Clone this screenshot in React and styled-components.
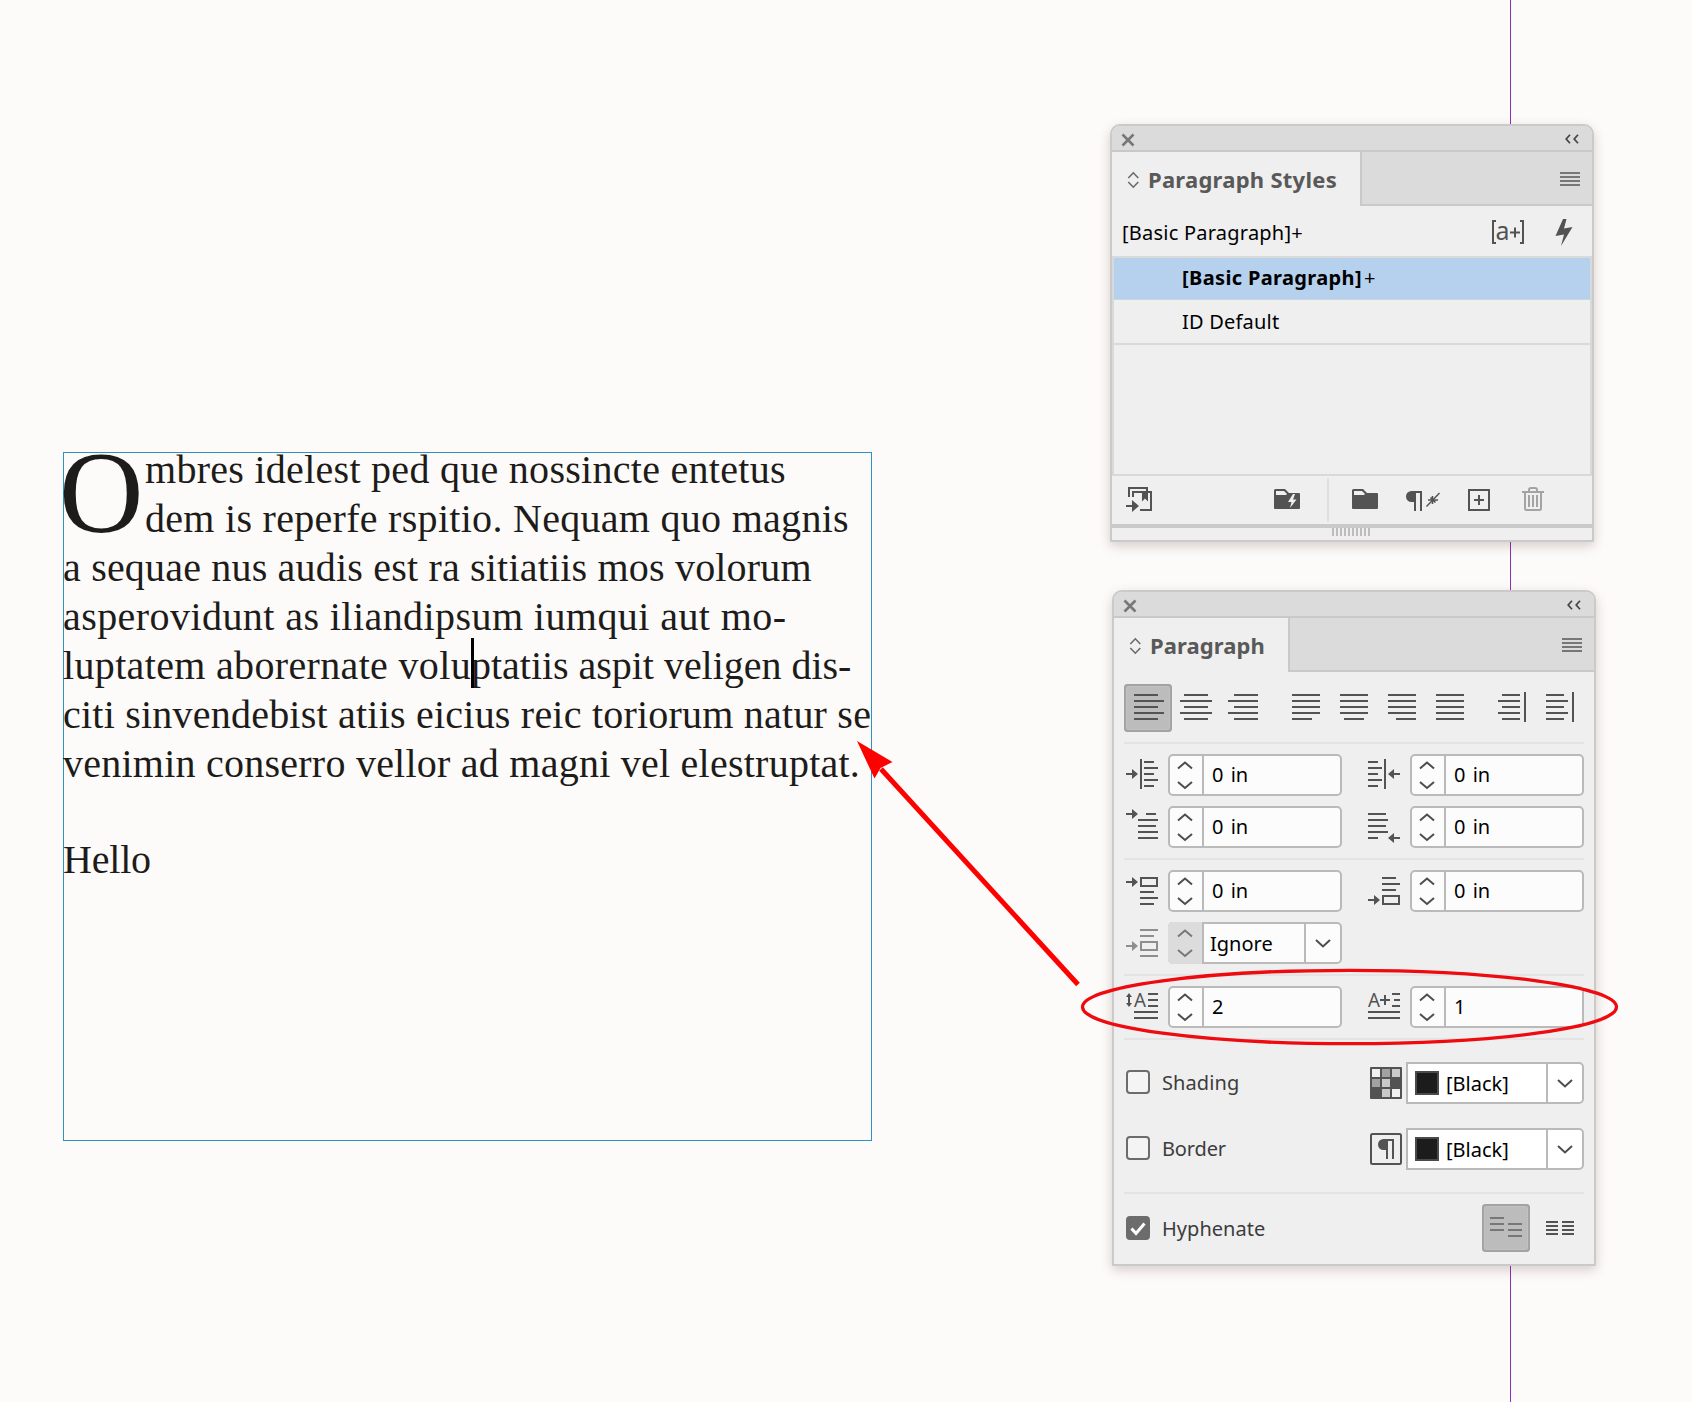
import React from 'react'
import styled, { createGlobalStyle, css } from 'styled-components'

const GlobalStyle = createGlobalStyle`
body {
    margin: 0;
    background: #fdfbf9;
    overflow: hidden;
}
* {
    box-sizing: border-box;
}
svg {
    display: block;
    flex: none;
    overflow: visible;
}
`

const Pasteboard = styled.div`
position: relative;
width: 1692px;
height: 1402px;
overflow: hidden;
font-family: 'Noto Sans', 'Open Sans', sans-serif;
font-size: 20px;
color: #000;
`

const MarginGuide = styled.div`
position: absolute;
left: 1510px;
top: 0;
width: 1px;
height: 100%;
background: #8c2fba;
`

/* text frame */

const TextFrame = styled.div`
position: absolute;
left: 63px;
top: 452px;
width: 809px;
height: 689px;
border: 1px solid #2b93bf;
font-family: 'Liberation Serif', serif;
font-size: 40px;
color: #1d1c1a;
`

const Story = styled.div`
margin: -8px 0 0 -1px;
`

const DropRow = styled.div`
display: flex;
`

const DropCap = styled.div`
width: 82px;
font-size: 117px;
line-height: 96px;
text-indent: -4px;
`

const Line = styled.div`
height: 49px;
line-height: 49px;
white-space: pre;
letter-spacing: ${p => p.$track || 0}px;
`

const LastLine = styled(Line)`
margin-top: 47px;
`

const Tight = styled.span`
letter-spacing: -0.03px;
`

const CaretHolder = styled.span`
position: relative;
`

const Caret = styled.span`
position: absolute;
left: 0;
top: -5px;
width: 3px;
height: 50px;
background: #000;
`

/* panels */

const Panel = styled.div`
position: absolute;
left: ${p => p.$x}px;
top: ${p => p.$y}px;
width: 484px;
background: #efefef;
border: 2px solid #c9cac9;
border-radius: 10px 10px 1px 1px;
box-shadow: 0 4px 12px rgba(70, 40, 40, 0.22);
`

const TitleBar = styled.div`
display: flex;
justify-content: space-between;
height: 26px;
padding: 8px 13px 0 10px;
background: #dbdbdb;
border-bottom: 2px solid #c9c9c9;
border-radius: 8px 8px 0 0;
`

const TabBar = styled.div`
display: flex;
height: 54px;
`

const Tab = styled.div`
display: flex;
align-items: center;
gap: 9px;
width: ${p => p.$width}px;
padding: 0 0 1px 16px;
font-size: 22px;
font-weight: 700;
letter-spacing: ${p => p.$track}px;
color: #595959;
white-space: nowrap;

svg {
    margin-top: 2px;
}
`

const TabRest = styled.div`
flex: 1;
display: flex;
justify-content: flex-end;
padding: 20px 12px 0 0;
background: #dbdbdb;
border-left: 2px solid #c9c9c9;
border-bottom: 2px solid #c9c9c9;
`

const CurrentStyle = styled.div`
display: flex;
align-items: center;
height: 50px;
padding: 3px 19px 0 10px;
letter-spacing: 0.23px;
`

const StyleActions = styled.div`
display: flex;
align-items: center;
gap: 30px;
margin: 0 0 1px auto;
`

const StyleList = styled.div`
height: 220px;
border: 2px solid #d9d9d9;
`

const StyleItem = styled.div`
display: flex;
align-items: center;
height: 45px;
padding-left: 68px;
letter-spacing: 0.2px;
border-bottom: 2px solid #d9d9d9;
${p => p.$selected && css`
    gap: 2px;
    height: 42px;
    padding-bottom: 2px;
    background: #b5d1ee;
    border-bottom: 1px solid #ccd7e3;
    letter-spacing: 0.36px;
`}
`

const Bottom = styled.div`
display: flex;
align-items: center;
height: 48px;
`

const Tool = styled.div`
margin-left: ${p => p.$gap}px;
`

const Separator = styled.div`
width: 2px;
height: 44px;
margin-left: 27px;
background: #dfdfdf;
`

const ResizeBar = styled.div`
display: flex;
justify-content: center;
gap: 2px;
height: 16px;
padding-right: 2px;
border-top: 4px solid #c9cac9;
`

const Grip = styled.div`
width: 2px;
height: 8px;
background: #bdbdbd;
`

const Body = styled.div`
padding: 12px 10px;
`

const AlignRow = styled.div`
display: flex;
justify-content: space-between;
`

const Group = styled.div`
display: flex;
`

const IconButton = styled.div`
width: 48px;
height: 48px;
${p => p.$active && css`
    background: #bcbcbc;
    border-radius: 4px;
    box-shadow: inset 0 0 0 2px #a3a3a3, inset 0 0 0 3px #c1c1c1;
`}
`

const Divider = styled.div`
height: 2px;
margin: ${p => p.$space || '10px'} 0;
background: #e4e4e4;
`

const Fields = styled.div`
display: grid;
grid-template-columns: 218px 218px;
column-gap: 24px;
row-gap: 10px;
`

const Field = styled.div`
display: flex;
`

const Box = styled.div`
display: flex;
width: 174px;
height: 42px;
border: 2px solid #bababa;
border-radius: 5px;
background: #fcfcfc;
`

const Stepper = styled.div`
width: 34px;
height: 42px;
margin: -2px 0 -2px -2px;
border-right: 2px solid #bababa;
box-sizing: content-box;
${p => p.$disabled && css`
    background: #dcdcdc;
    border-radius: 5px 0 0 5px;
`}
`

const Value = styled.div`
flex: 1;
display: flex;
align-items: center;
padding: 0 0 ${p => p.$lift || 0}px ${p => p.$left || 8}px;
word-spacing: 2px;
`

const DropButton = styled.div`
display: flex;
align-items: center;
justify-content: center;
width: 36px;
border-left: 2px solid #bababa;
`

const OptionRow = styled.div`
display: flex;
align-items: center;
justify-content: space-between;
height: ${p => p.$height || 42}px;
margin-bottom: ${p => p.$after || 0}px;
`

const Check = styled.div`
display: flex;
align-items: center;
gap: 12px;
padding: 0 0 ${p => p.$lift || 0}px 2px;
color: #3c3c3c;
letter-spacing: ${p => p.$track}px;
`

const CheckBox = styled.div`
width: 24px;
height: 24px;
border: 2px solid #6c6c6c;
border-radius: 4px;
background: ${p => (p.$checked ? '#6c6c6c' : '#f4f4f4')};
`

const ColorSelect = styled.div`
display: flex;
width: 178px;
height: 42px;
margin-left: 4px;
border: 2px solid #bababa;
border-radius: 0 5px 5px 0;
background: #fff;
`

const Swatch = styled.div`
width: 24px;
height: 24px;
margin: 7px 0 0 7px;
border: 2px solid #4a4a4a;
background: #1c1c1c;
`

const Annotation = styled.svg`
position: absolute;
left: 0;
top: 0;
`

const INK = '#535353'

const CloseIcon = () => (
    <svg width="12" height="12" viewBox="0 0 12 12">
        <path d="M0.5 0.5l11 11M11.5 0.5l-11 11" stroke="#777" strokeWidth="2.6" />
    </svg>
)

const CollapseIcon = () => (
    <svg width="14" height="10" viewBox="0 0 14 10">
        <path d="M5 0.8L1.2 5 5 9.2M13 0.8L9.2 5l3.8 4.2" fill="none" stroke="#444" strokeWidth="1.7" />
    </svg>
)

const UpDownIcon = () => (
    <svg width="11" height="16" viewBox="0 0 11 16">
        <path d="M0.3 6L5.3 0.8 10.300 6M0.3 10l5 5.200 5-5.200" fill="none" stroke="#6a6a6a" strokeWidth="1.6" />
    </svg>
)

const MenuIcon = () => (
    <svg width="20" height="14" viewBox="0 0 20 14" fill="#777">
        {[0, 4, 8, 12].map(y => <rect key={y} y={y} width="20" height="2" />)}
    </svg>
)

// each row is [x1, x2, y], drawn 2px thick
const Bars = ({ rows }) => rows.map(([a, b, y]) => (
    <rect key={a + '-' + y} x={a} y={y} width={b - a} height="2" />
))

const ArrowRight = ({ y, x = 2 }) => (
    <path d={`M${x} ${y - 1}h6v-4l6 5-6 5v-4h-6z`} />
)

const ArrowLeft = ({ y }) => (
    <path d={`M34 ${y - 1}h-6v-4l-6 5 6 5v-4h6z`} />
)

const alignYs = [10, 16, 22, 28, 34]

const AlignIcon = ({ spans, bar, color = INK }) => (
    <svg width="48" height="48" fill={color}>
        <Bars rows={spans.map(([a, b], i) => [a, b, alignYs[i]])} />
        {bar && <rect x={bar} y="8" width="2" height="30" />}
    </svg>
)

const alignGroups = [
    [
        { spans: [[10, 34], [10, 40], [10, 34], [10, 40], [10, 34]], active: true },
        { spans: [[12, 36], [8, 40], [12, 36], [8, 40], [12, 36]] },
        { spans: [[14, 38], [8, 38], [14, 38], [8, 38], [14, 38]] },
    ],
    [
        { spans: [[10, 38], [10, 38], [10, 38], [10, 38], [10, 30]] },
        { spans: [[10, 38], [10, 38], [10, 38], [10, 38], [14, 34]] },
        { spans: [[10, 38], [10, 38], [10, 38], [10, 38], [18, 38]] },
        { spans: [[10, 38], [10, 38], [10, 38], [10, 38], [10, 38]] },
    ],
    [
        { spans: [[14, 32], [10, 32], [14, 32], [10, 32], [14, 32]], bar: 36 },
        { spans: [[10, 28], [10, 32], [10, 28], [10, 32], [10, 28]], bar: 36 },
    ],
]

const FieldIcon = ({ color = INK, children }) => (
    <svg width="44" height="42" fill={color}>{children}</svg>
)

const LeftIndent = () => (
    <FieldIcon>
        <ArrowRight y={20} />
        <rect x="16" y="5" width="2" height="30" />
        <Bars rows={[[20, 30, 7], [20, 34, 13], [20, 30, 19], [20, 34, 25], [20, 30, 31]]} />
    </FieldIcon>
)

const RightIndent = () => (
    <FieldIcon>
        <ArrowLeft y={20} />
        <rect x="18" y="5" width="2" height="30" />
        <Bars rows={[[2, 12, 7], [2, 16, 13], [2, 12, 19], [2, 16, 25], [2, 12, 31]]} />
    </FieldIcon>
)

const FirstLineIndent = () => (
    <FieldIcon>
        <ArrowRight y={8} />
        <Bars rows={[[22, 32, 7], [14, 34, 13], [14, 32, 19], [14, 34, 25], [14, 34, 31]]} />
    </FieldIcon>
)

const LastLineIndent = () => (
    <FieldIcon>
        <ArrowLeft y={32} />
        <Bars rows={[[2, 20, 7], [2, 22, 13], [2, 20, 19], [2, 22, 25], [2, 12, 31]]} />
    </FieldIcon>
)

const SpaceBefore = () => (
    <FieldIcon>
        <ArrowRight y={12} />
        <rect x="17" y="8" width="16" height="8" fill="none" stroke={INK} strokeWidth="2" />
        <Bars rows={[[16, 30, 21], [16, 34, 27], [16, 30, 33]]} />
    </FieldIcon>
)

const SpaceAfter = () => (
    <FieldIcon>
        <ArrowRight y={30} />
        <Bars rows={[[16, 30, 7], [16, 34, 13], [16, 30, 19]]} />
        <rect x="17" y="26" width="16" height="8" fill="none" stroke={INK} strokeWidth="2" />
    </FieldIcon>
)

const SpaceBetween = () => (
    <FieldIcon color="#8e8e8e">
        <ArrowRight y={24} />
        <Bars rows={[[16, 34, 7], [16, 30, 13], [16, 34, 33]]} />
        <rect x="17" y="20" width="16" height="8" fill="none" stroke="#8e8e8e" strokeWidth="2" />
    </FieldIcon>
)

const DropLines = () => (
    <FieldIcon>
        <path d="M5 7l3 4H6v6h2l-3 4-3-4h2v-6H2z" />
        <text x="10" y="21" fontSize="19.5" textLength="12" lengthAdjust="spacingAndGlyphs">A</text>
        <Bars rows={[[24, 34, 7], [24, 34, 13], [24, 34, 19], [10, 34, 25], [10, 34, 31]]} />
    </FieldIcon>
)

const DropChars = () => (
    <FieldIcon>
        <text x="2" y="21" fontSize="19.5" textLength="12" lengthAdjust="spacingAndGlyphs">A</text>
        <path d="M14 13h4V9h2v4h4v2h-4v4h-2v-4h-4z" />
        <Bars rows={[[26, 34, 7], [28, 34, 13], [26, 34, 19], [2, 34, 25], [2, 34, 31]]} />
    </FieldIcon>
)

const SwatchGrid = () => (
    <svg width="32" height="32">
        <rect width="32" height="32" rx="1" fill={INK} />
        <path d="M2 2h8v8H2zM22 22h8v8h-8z" fill="#f1f1f1" />
        <path d="M12 2h8v8h-8zM2 12h8v8H2z" fill="#a2a2a2" />
        <path d="M22 2h8v8h-8zM12 12h8v8h-8zM12 22h8v8h-8z" fill="#c9c9c9" />
    </svg>
)

const BorderIcon = () => (
    <svg width="32" height="32" fill={INK}>
        <rect x="1" y="1" width="30" height="30" rx="1.5" fill="none" stroke={INK} strokeWidth="2" />
        <path d="M13.5 6H24v20h-2V8h-4v18h-2V17h-2.5a5.5 5.5 0 0 1 0-11z" />
    </svg>
)

const OverrideIcon = () => (
    <svg width="34" height="24" fill={INK}>
        <path d="M5 1H2v22h3M29 1h3v22h-3" fill="none" stroke={INK} strokeWidth="2" />
        <text x="4.5" y="20" fontSize="26" textLength="14" lengthAdjust="spacingAndGlyphs" letterSpacing="0">a</text>
        <path d="M19 11.5h4V7.5h2v4h4v2h-4v4h-2v-4h-4z" />
    </svg>
)

const BoltIcon = () => (
    <svg width="18" height="27" fill={INK}>
        <path d="M8 0h3.500L9 9.500l8.500-1.500L6 27l3-11.500-8.500 1.500z" />
    </svg>
)

const LoadIcon = () => (
    <svg width="26" height="26" fill={INK}>
        <path d="M3 10V1h18v3M7 10V5h18v18H14" fill="none" stroke={INK} strokeWidth="2" />
        <path d="M16 5h6v9.500l-3-3-3 3z" />
        <path d="M0 18h6v-5l7 6-7 6v-5H0z" />
    </svg>
)

const FolderIcon = ({ bolt }) => (
    <svg width="26" height="26" fill={INK}>
        <path d="M0 3.500A1.500 1.500 0 0 1 1.500 2H11l4 4h10a1 1 0 0 1 1 1v14a1 1 0 0 1-1 1H1a1 1 0 0 1-1-1z" />
        <path d="M2 4h8l3 3-1 1H2z" fill="#efefef" />
        {bolt && <path d="M19 7l-5 8h3.500L16 21l6.500-8.500h-3.500L21 7z" fill="#efefef" />}
    </svg>
)

const ClearIcon = () => (
    <svg width="34" height="26" fill={INK}>
        <path d="M5.500 4H16v20h-2V6h-4v18H8V15H5.500a5.500 5.500 0 0 1 0-11z" />
        <path d="M20.500 19.500L33.500 6" fill="none" stroke={INK} strokeWidth="1.4" />
        <path d="M26.500 9v8M22 13h10M24.500 10.500l5 5" fill="none" stroke={INK} strokeWidth="1.600" />
    </svg>
)

const NewIcon = () => (
    <svg width="22" height="26">
        <path d="M1 3h20v20H1zM11 8v10M6 13h10" fill="none" stroke={INK} strokeWidth="2" />
    </svg>
)

const TrashIcon = () => (
    <svg width="22" height="26">
        <path d="M0 5h22M7 5V3a2 2 0 0 1 2-2h4a2 2 0 0 1 2 2v2M3 5v16.500a1.500 1.500 0 0 0 1.500 1.500h13a1.500 1.500 0 0 0 1.500-1.500V5M7 8v12M11 8v12M15 8v12" fill="none" stroke="#a3a3a3" strokeWidth="2" />
    </svg>
)

const StepArrows = ({ color = '#4d4d4d' }) => (
    <svg width="34" height="42">
        <path d="M10 14.500l7-6 7 6M10 28l7 6 7-6" fill="none" stroke={color} strokeWidth="2" />
    </svg>
)

const ChevronDown = () => (
    <svg width="16" height="9">
        <path d="M1 1l7 6.500L15 1" fill="none" stroke="#4d4d4d" strokeWidth="2" />
    </svg>
)

const PanelHeader = ({ title, width, track }) => (
    <>
        <TitleBar>
            <CloseIcon />
            <CollapseIcon />
        </TitleBar>
        <TabBar>
            <Tab $width={width} $track={track}>
                <UpDownIcon />
                {title}
            </Tab>
            <TabRest>
                <MenuIcon />
            </TabRest>
        </TabBar>
    </>
)

const NumberField = ({ icon, value = '0 in' }) => (
    <Field>
        {icon}
        <Box>
            <Stepper><StepArrows /></Stepper>
            <Value $lift={2}>{value}</Value>
        </Box>
    </Field>
)

const ColorField = ({ icon, name }) => (
    <Group>
        <OptionRow>{icon}</OptionRow>
        <ColorSelect>
            <Swatch />
            <Value $left={7}>{name}</Value>
            <DropButton><ChevronDown /></DropButton>
        </ColorSelect>
    </Group>
)

const StylesPanel = () => (
    <Panel $x={1110} $y={124}>
        <PanelHeader title="Paragraph Styles" width={248} track={0.26} />
        <CurrentStyle>
            [Basic Paragraph]+
            <StyleActions>
                <OverrideIcon />
                <BoltIcon />
            </StyleActions>
        </CurrentStyle>
        <StyleList>
            <StyleItem $selected><b>[Basic Paragraph]</b>+</StyleItem>
            <StyleItem>ID Default</StyleItem>
        </StyleList>
        <Bottom>
            <Tool $gap={14}><LoadIcon /></Tool>
            <Tool $gap={122}><FolderIcon bolt /></Tool>
            <Separator />
            <Tool $gap={23}><FolderIcon /></Tool>
            <Tool $gap={28}><ClearIcon /></Tool>
            <Tool $gap={28}><NewIcon /></Tool>
            <Tool $gap={32}><TrashIcon /></Tool>
        </Bottom>
        <ResizeBar>
            {Array.from({ length: 10 }, (_, i) => <Grip key={i} />)}
        </ResizeBar>
    </Panel>
)

const ParagraphPanel = () => (
    <Panel $x={1112} $y={590}>
        <PanelHeader title="Paragraph" width={174} track={0.1} />
        <Body>
            <AlignRow>
                {alignGroups.map((group, g) => (
                    <Group key={g}>
                        {group.map((item, i) => (
                            <IconButton key={i} $active={item.active}>
                                <AlignIcon spans={item.spans} bar={item.bar} />
                            </IconButton>
                        ))}
                    </Group>
                ))}
            </AlignRow>
            <Divider />
            <Fields>
                <NumberField icon={<LeftIndent />} />
                <NumberField icon={<RightIndent />} />
                <NumberField icon={<FirstLineIndent />} />
                <NumberField icon={<LastLineIndent />} />
            </Fields>
            <Divider />
            <Fields>
                <NumberField icon={<SpaceBefore />} />
                <NumberField icon={<SpaceAfter />} />
                <Field>
                    <SpaceBetween />
                    <Box>
                        <Stepper $disabled><StepArrows color="#777" /></Stepper>
                        <Value $left={6}>Ignore</Value>
                        <DropButton><ChevronDown /></DropButton>
                    </Box>
                </Field>
            </Fields>
            <Divider />
            <Fields>
                <NumberField icon={<DropLines />} value="2" />
                <NumberField icon={<DropChars />} value="1" />
            </Fields>
            <Divider $space="10px 0 22px" />
            <OptionRow $after={24}>
                <Check $track={0.1} $lift={2}><CheckBox />Shading</Check>
                <ColorField icon={<SwatchGrid />} name="[Black]" />
            </OptionRow>
            <OptionRow>
                <Check $track={-0.15} $lift={2}><CheckBox />Border</Check>
                <ColorField icon={<BorderIcon />} name="[Black]" />
            </OptionRow>
            <Divider $space="22px 0 10px" />
            <OptionRow $height={48}>
                <Check $track={0.02}>
                    <CheckBox $checked>
                        <svg width="20" height="20">
                            <path d="M3.500 10.500l4.500 5L16.500 5.500" fill="none" stroke="#fff" strokeWidth="3" />
                        </svg>
                    </CheckBox>
                    Hyphenate
                </Check>
                <Group>
                    <IconButton $active>
                        <svg width="48" height="48" fill="#777">
                            <Bars rows={[[8, 22, 13], [8, 22, 19], [8, 22, 25], [26, 40, 19], [26, 40, 25], [26, 40, 31]]} />
                        </svg>
                    </IconButton>
                    <Tool $gap={6}>
                        <IconButton>
                            <svg width="48" height="48" fill={INK}>
                                <Bars rows={[17, 21, 25, 29].flatMap(y => [[10, 22, y], [26, 38, y]])} />
                            </svg>
                        </IconButton>
                    </Tool>
                </Group>
            </OptionRow>
        </Body>
    </Panel>
)

const App = () => {
    return (
        <Pasteboard>
            <GlobalStyle />
            <MarginGuide />
            <TextFrame>
                <Story>
                    <DropRow>
                        <DropCap>O</DropCap>
                        <div>
                            <Line $track={0.28}>mbres idelest ped que nossincte entetus</Line>
                            <Line $track={0.29}>dem is reperfe rspitio. Nequam quo magnis</Line>
                        </div>
                    </DropRow>
                    <Line $track={0.19}>a sequae nus audis est ra sitiatiis mos volorum</Line>
                    <Line $track={0.43}>asperovidunt as iliandipsum iumqui aut mo-</Line>
                    <Line $track={0.34}>
                        luptatem aborernate volu<CaretHolder><Caret /></CaretHolder>
                        <Tight>ptatiis aspit veligen dis-</Tight>
                    </Line>
                    <Line $track={0.22}>citi sinvendebist atiis eicius reic toriorum natur se</Line>
                    <Line $track={0.24}>venimin conserro vellor ad magni vel elestruptat.</Line>
                    <LastLine $track={-0.2}>Hello</LastLine>
                </Story>
            </TextFrame>
            <StylesPanel />
            <ParagraphPanel />
            <Annotation width="1692" height="1402">
                <ellipse cx="1349.500" cy="1007" rx="267" ry="36.700" fill="none" stroke="#ee0a0e" strokeWidth="3.300" />
                <path d="M881 769L1078 984.500" stroke="#fe0000" strokeWidth="5" />
                <path d="M857 741l35.500 21-12 6-6 10.500z" fill="#fe0000" />
            </Annotation>
        </Pasteboard>
    )
}

export default App
